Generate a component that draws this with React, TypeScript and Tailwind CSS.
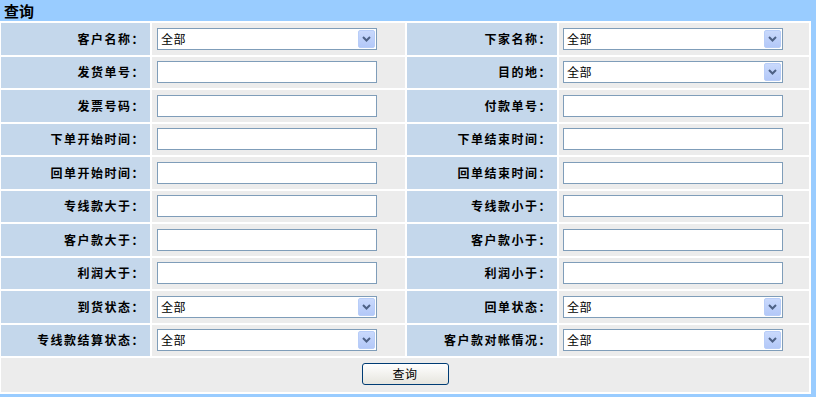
import React from "react";

type Field = { label: string; kind: "select" | "text" };

const ROWS: [Field, Field][] = [
  [{ label: "客户名称：", kind: "select" }, { label: "下家名称：", kind: "select" }],
  [{ label: "发货单号：", kind: "text" }, { label: "目的地：", kind: "select" }],
  [{ label: "发票号码：", kind: "text" }, { label: "付款单号：", kind: "text" }],
  [{ label: "下单开始时间：", kind: "text" }, { label: "下单结束时间：", kind: "text" }],
  [{ label: "回单开始时间：", kind: "text" }, { label: "回单结束时间：", kind: "text" }],
  [{ label: "专线款大于：", kind: "text" }, { label: "专线款小于：", kind: "text" }],
  [{ label: "客户款大于：", kind: "text" }, { label: "客户款小于：", kind: "text" }],
  [{ label: "利润大于：", kind: "text" }, { label: "利润小于：", kind: "text" }],
  [{ label: "到货状态：", kind: "select" }, { label: "回单状态：", kind: "select" }],
  [{ label: "专线款结算状态：", kind: "select" }, { label: "客户款对帐情况：", kind: "select" }],
];

function FakeSelect() {
  return (
    <div className="relative w-[220px] h-[22px] border border-[#7f9db9] bg-white flex items-center pl-[3px] text-[12px] tracking-[0.5px] text-black">
      全部
      <div className="absolute right-[1px] top-[1px] w-[17px] h-[18px] rounded-[2px] border border-[#b8cdf8] bg-gradient-to-b from-[#c9d9fc] to-[#b3c8f8] flex items-center justify-center">
        <svg width="9" height="6" viewBox="0 0 9 6">
          <polyline points="1,1 4.5,4.5 8,1" fill="none" stroke="#4d6185" strokeWidth="2" />
        </svg>
      </div>
    </div>
  );
}

function TextBox() {
  return <div className="w-[220px] h-[22px] border border-[#7f9db9] bg-white" />;
}

function Label({ text }: { text: string }) {
  return (
    <div className="bg-[#c4d7eb] flex items-center justify-end pr-[5px] text-[12px] font-bold tracking-[1.5px] text-black">
      {text}
    </div>
  );
}

function Cell({ field, left }: { field: Field; left: boolean }) {
  return (
    <div className={`bg-[#ececec] flex items-center ${left ? "pl-[5px]" : "pl-[4px]"}`}>
      {field.kind === "select" ? <FakeSelect /> : <TextBox />}
    </div>
  );
}

export default function App() {
  return (
    <div
      className="w-[816px] h-[397px] bg-[#99ccff] overflow-hidden"
      style={{ fontFamily: '"Noto Sans CJK SC", "Noto Sans", sans-serif' }}
    >
      <div className="h-[21px] flex items-center pl-[4px] text-[15px] font-bold text-black leading-none">
        查询
      </div>
      <div className="w-[811px] bg-white pt-[2px] pl-[1px] pr-[2px] pb-[2px] grid grid-cols-[149px_253px_150px_250px] grid-rows-[repeat(10,31.5px)_34px] gap-[2px]">
        {ROWS.map(([a, b], i) => (
          <React.Fragment key={i}>
            <Label text={a.label} />
            <Cell field={a} left />
            <Label text={b.label} />
            <Cell field={b} left={false} />
          </React.Fragment>
        ))}
        <div className="col-span-4 bg-[#ececec] flex items-start justify-center pt-[5px]">
          <button className="w-[87px] h-[22px] border border-[#003c74] rounded-[3px] bg-gradient-to-b from-white to-[#e6e5de] text-[12px] tracking-[0.5px] text-black leading-none">
            查询
          </button>
        </div>
      </div>
    </div>
  );
}
